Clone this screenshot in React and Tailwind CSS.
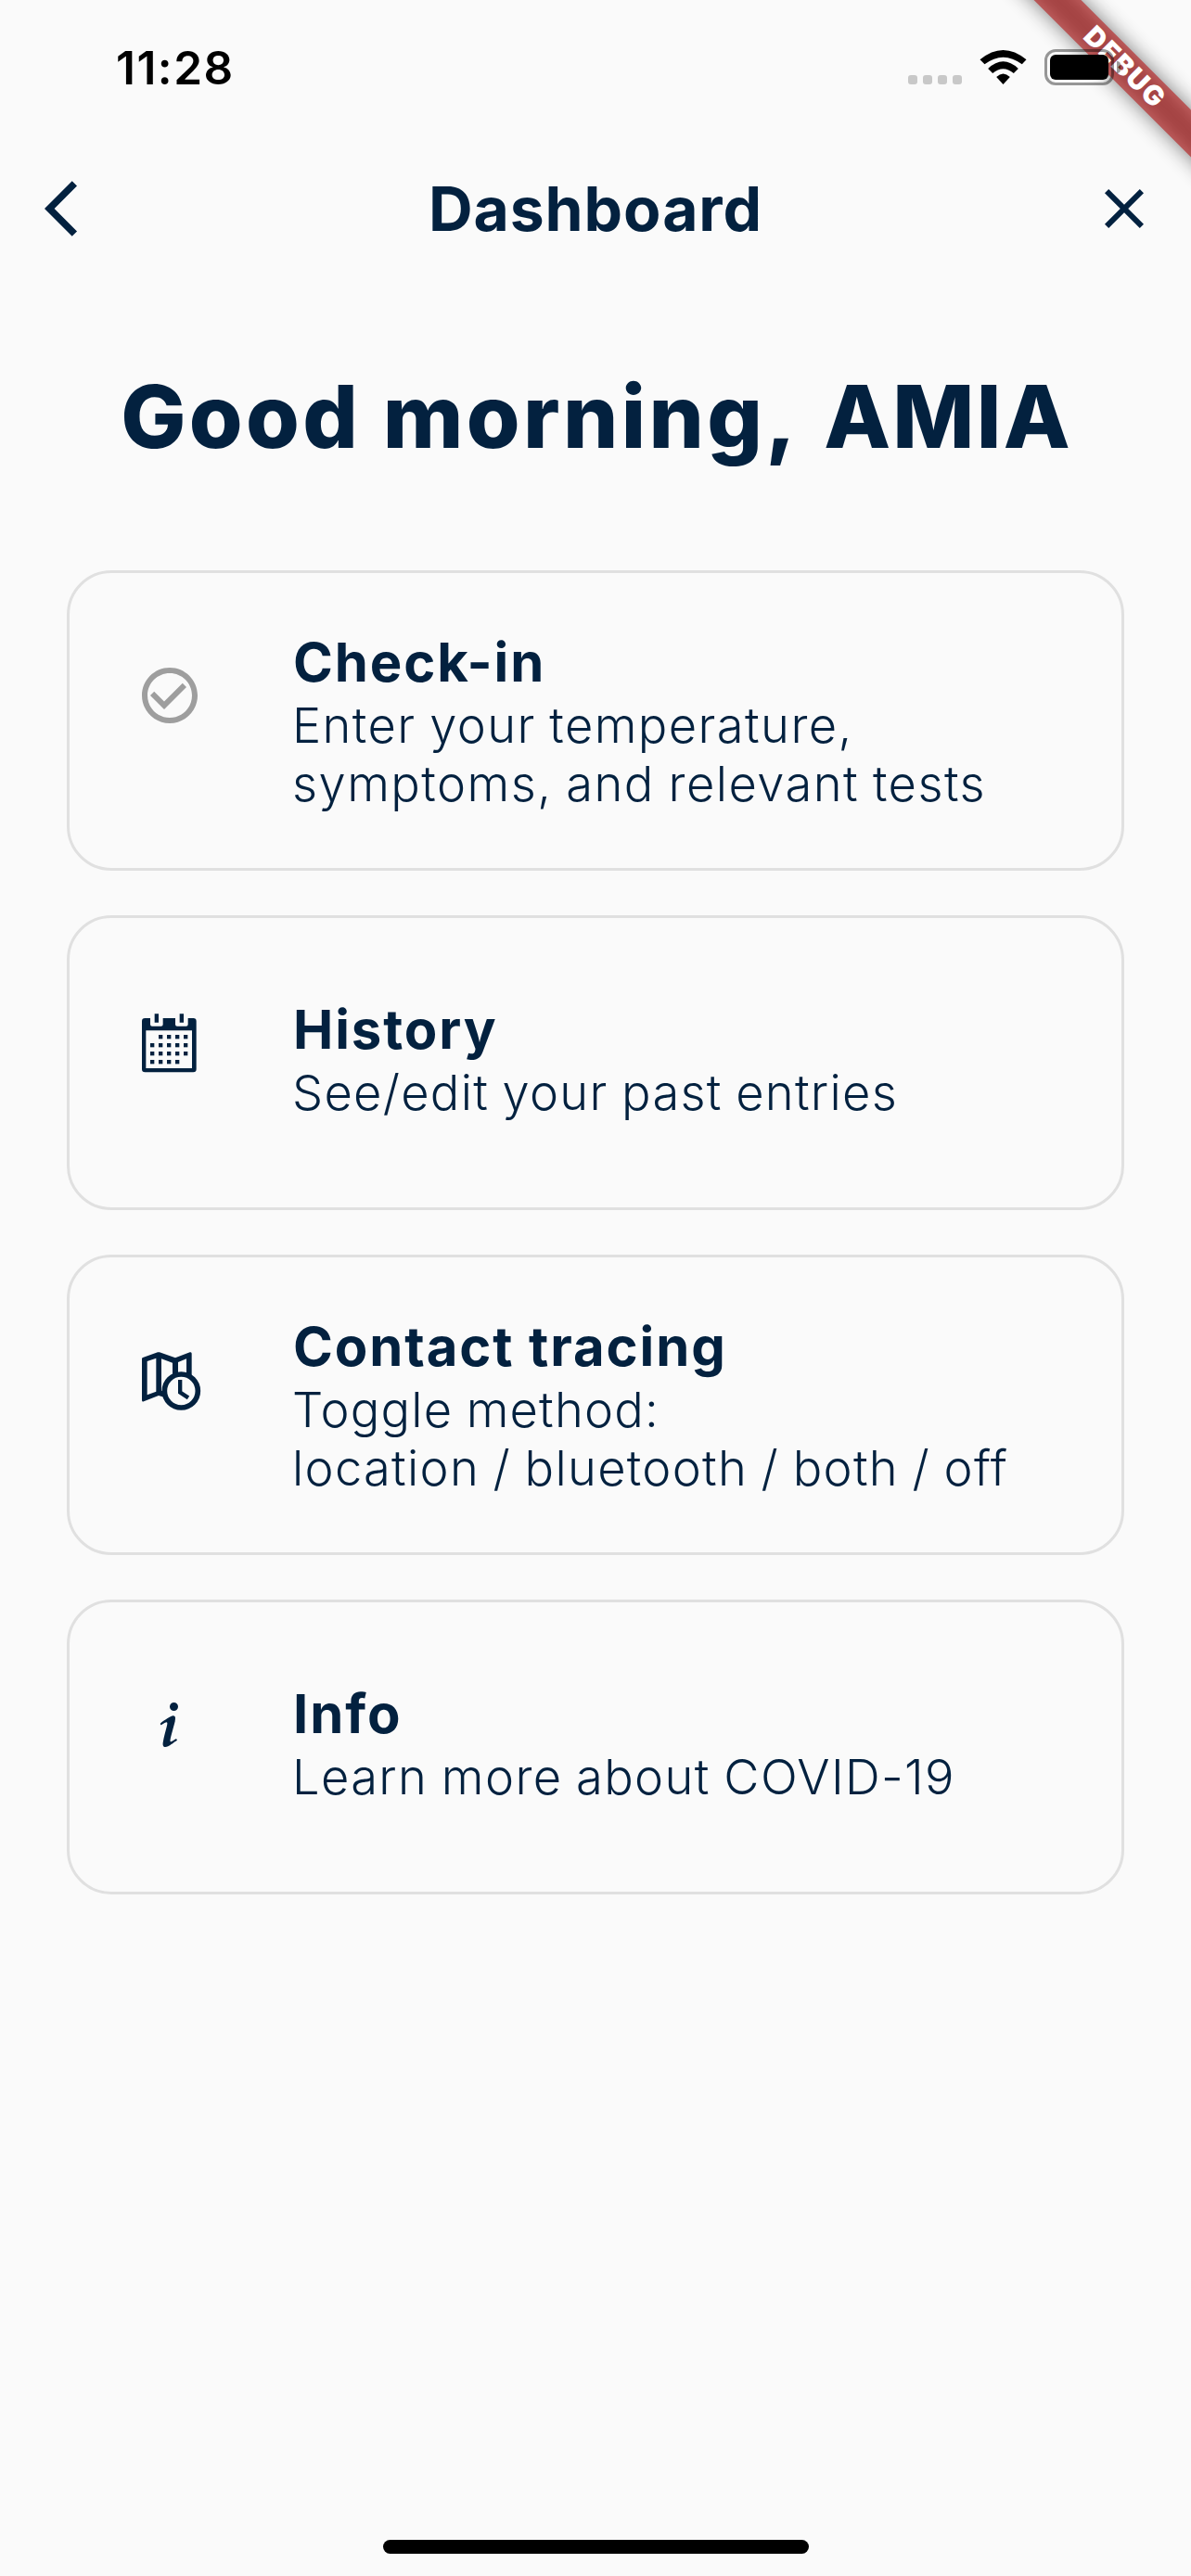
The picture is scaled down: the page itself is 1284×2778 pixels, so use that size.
import React from "react";

function DebugBanner() {
  return (
    <div className="pointer-events-none absolute inset-0 overflow-hidden">
      <div className="absolute left-[1012px] top-[54px] h-[36px] w-[400px] rotate-45 bg-black/50 blur-[11px]" />
      <div className="absolute left-[1012px] top-[54px] flex h-[36px] w-[400px] rotate-45 items-center justify-center bg-[#b71c1ca0]">
        <span className="pl-[2px] text-[29.5px] font-black leading-none tracking-[1.6px] text-white">DEBUG</span>
      </div>
    </div>
  );
}

function StatusBar() {
  return (
    <div className="relative flex h-[132px] w-full items-start justify-between pl-[125px] pr-[76px] pt-[43px]">
      <span className="text-[49.5px] font-semibold leading-[60px] tracking-[1.5px] text-black">11:28</span>
      <div className="flex items-start pt-[10px]">
        <div className="mt-[28px] flex gap-[6px]">
          {[0, 1, 2, 3].map((i) => (
            <span key={i} className="h-[10px] w-[10px] rounded-[3px] bg-[#c8c8c8]" />
          ))}
        </div>
        <svg className="ml-[19px] mt-px h-[37px] w-[51px]" viewBox="348 162 152 111" fill="#000">
          <path d="M349 193Q424 131 499 193L485 208Q424 162 364 208Z" />
          <path d="M375 222Q424 176 473 222L458 237Q424 208 390 237Z" />
          <path d="M402 249Q424 228 446 249L424 273Z" />
        </svg>
        <div className="ml-[19px] flex h-[39px] w-[75px] rounded-[12px] border-[3px] border-black/40 p-[3px]">
          <span className="h-[27px] w-[63px] rounded-[6px] bg-black" />
        </div>
        <span className="ml-[3px] mt-[13px] h-[13px] w-[4px] rounded-r-full bg-black/40" />
      </div>
    </div>
  );
}

function CheckIcon() {
  return (
    <svg className="h-[72px] w-[72px]" viewBox="0 0 24 24" fill="#9e9e9e">
      <path d="M16.59 7.58L10 14.17l-3.59-3.58L5 12l5 5 8-8zM12 2C6.48 2 2 6.48 2 12s4.48 10 10 10 10-4.48 10-10S17.52 2 12 2zm0 18c-4.42 0-8-3.58-8-8s3.58-8 8-8 8 3.58 8 8-3.58 8-8 8z" />
    </svg>
  );
}

const calendarDots = [
  [1, 2, 3, 4],
  [0, 1, 2, 3, 4],
  [0, 1, 2, 3, 4],
  [0, 1, 2, 3],
];

function CalendarIcon() {
  return (
    <svg className="h-[72px] w-[72px]" viewBox="81 57 216 216" fill="#03213f">
      <path
        fillRule="evenodd"
        d="M109 84H126V104Q126 110 132 110H161Q167 110 167 104V84H207V104Q207 110 213 110H242Q248 110 248 104V84H265Q275 84 275 94V249Q275 259 265 259H109Q99 259 99 249V94Q99 84 109 84ZM112 124V246H261V124Z"
      />
      <path d="M140 70H153V98H140ZM221 70H234V98H221Z" />
      {calendarDots.map((cols, row) =>
        cols.map((col) => <rect key={row + "-" + col} x={126 + col * 27} y={138 + row * 27} width="13" height="13" />)
      )}
    </svg>
  );
}

function MapClockIcon() {
  return (
    <svg className="h-[72px] w-[72px]" viewBox="81 66 216 216" fill="#03213f">
      <path
        fillRule="evenodd"
        d="M102 102L150 85Q153 84 156 85L207 103L254 85Q260 83 260 89V170L175 232L153 225L105 244Q99 246 99 240V106Q99 103 102 102ZM116 114V223L145 212V104ZM162 106V210L198 210V119ZM216 117V190H243V106Z"
      />
      <circle cx="226" cy="210" r="54" fill="#fafafa" stroke="#03213f" strokeWidth="17" />
      <path d="M222.5 174V215L249 232" fill="none" stroke="#03213f" strokeWidth="13" />
    </svg>
  );
}

function InfoIcon() {
  return (
    <svg className="h-[72px] w-[72px]" viewBox="0 0 24 24" fill="#03213f">
      <path d="M13.5,4A1.5,1.5 0 0,0 12,5.5A1.5,1.5 0 0,0 13.5,7A1.5,1.5 0 0,0 15,5.5A1.5,1.5 0 0,0 13.5,4M13.14,8.77C11.95,8.87 8.7,11.46 8.7,11.46C8.5,11.61 8.56,11.6 8.72,11.88C8.88,12.15 8.86,12.17 9.05,12.04C9.25,11.91 9.58,11.7 10.13,11.36C12.25,10 10.47,13.14 9.56,18.43C9.2,21.05 11.56,19.7 12.17,19.3C12.77,18.91 14.38,17.8 14.54,17.69C14.76,17.54 14.6,17.42 14.43,17.17C14.31,17 14.19,17.12 14.19,17.12C13.54,17.55 12.35,18.45 12.19,17.88C12,17.31 13.22,13.4 13.89,10.71C14,10.07 14.3,8.67 13.14,8.77Z" />
    </svg>
  );
}

const cards = [
  {
    title: "Check-in",
    lines: [
      { text: "Enter your temperature,", tracking: "tracking-[1.42px]" },
      { text: "symptoms, and relevant tests", tracking: "tracking-[1.48px]" },
    ],
    Icon: CheckIcon,
    box: "h-[324px]",
    iconPad: "pt-[96px]",
    textPad: "pt-[60px]",
  },
  {
    title: "History",
    lines: [{ text: "See/edit your past entries", tracking: "tracking-[1.28px]" }],
    Icon: CalendarIcon,
    box: "h-[318px]",
    iconPad: "pt-[99px]",
    textPad: "pt-[84px]",
  },
  {
    title: "Contact tracing",
    lines: [
      { text: "Toggle method:", tracking: "tracking-[1.2px]" },
      { text: "location / bluetooth / both / off", tracking: "tracking-[1.3px]" },
    ],
    Icon: MapClockIcon,
    box: "h-[324px]",
    iconPad: "pt-[96px]",
    textPad: "pt-[60px]",
  },
  {
    title: "Info",
    lines: [{ text: "Learn more about COVID-19", tracking: "tracking-[1.37px]" }],
    Icon: InfoIcon,
    box: "h-[318px]",
    iconPad: "pt-[96px]",
    textPad: "pt-[84px]",
  },
];

function Card({ title, lines, Icon, box, iconPad, textPad }) {
  return (
    <div className={"flex items-start rounded-[48px] border-[3px] border-[#e0e0e0] pl-[72px] " + box}>
      <div className={"w-[168px] shrink-0 " + iconPad}>
        <Icon />
      </div>
      <div className={"whitespace-nowrap " + textPad}>
        <h2 className="mb-px pl-px text-[58px] font-bold leading-[72px] tracking-[1.9px]">{title}</h2>
        {lines.map((line) => (
          <p key={line.text} className={"text-[52.4px] font-light leading-[63px] [word-spacing:-1.5px] " + line.tracking}>
            {line.text}
          </p>
        ))}
      </div>
    </div>
  );
}

export default function App() {
  return (
    <div className="relative flex h-[2778px] w-[1284px] flex-col overflow-hidden bg-[#fafafa] font-['Inter',sans-serif] text-[#03213f]">
      <DebugBanner />
      <StatusBar />
      <header className="flex h-[186px] items-center justify-between pl-[48px] pr-[36px]">
        <svg className="h-[72px] w-[72px]" viewBox="0 0 24 24" fill="#03213f">
          <path d="M11.67 3.87L9.9 2.1 0 12l9.9 9.9 1.77-1.77L3.54 12z" />
        </svg>
        <h1 className="pr-[12px] text-[66px] font-bold leading-[76px] tracking-[0.9px]">Dashboard</h1>
        <svg className="h-[72px] w-[72px]" viewBox="0 0 24 24" fill="#03213f">
          <path d="M19 6.41L17.59 5 12 10.59 6.41 5 5 6.41 10.59 12 5 17.59 6.41 19 12 13.41 17.59 19 19 17.59 13.41 12z" />
        </svg>
      </header>
      <div className="mt-[75px] flex h-[222px] justify-center pl-[2px]">
        <p className="whitespace-nowrap text-[93.5px] font-extrabold leading-[112px] tracking-[3.3px]">
          Good morning, <span className="ml-[7px] tracking-[2.2px]">AMIA</span>
        </p>
      </div>
      <main className="flex flex-col gap-[48px] px-[72px]">
        {cards.map((card) => (
          <Card key={card.title} {...card} />
        ))}
      </main>
      <div className="mb-[24px] mt-auto h-[15px] w-[459px] self-center rounded-full bg-black" />
    </div>
  );
}
